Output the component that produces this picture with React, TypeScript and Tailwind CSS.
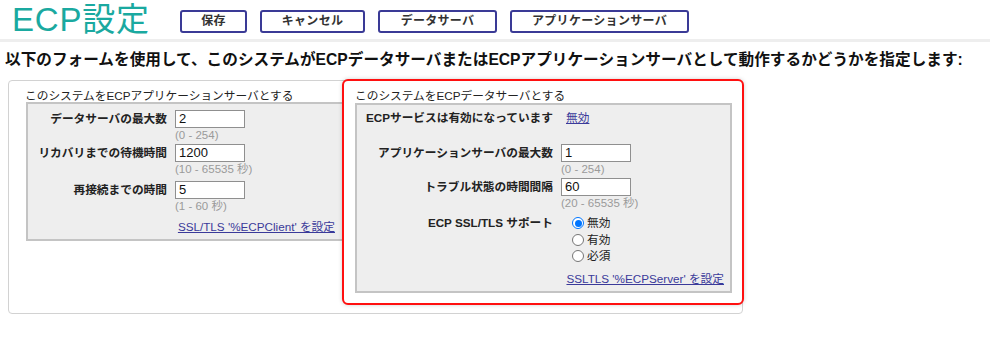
import React from "react";

function Field({ label, value, hint, rowCls, labelW }: { label: string; value: string; hint: string; rowCls: string; labelW: string }) {
  return (
    <div className={"flex items-start " + rowCls}>
      <div className={labelW + " h-[18px] flex items-center justify-end text-right font-bold text-[11.7px] leading-[14px] text-[#222] whitespace-nowrap"}>
        {label}
      </div>
      <div className="ml-[8px]">
        <div className="w-[70px] h-[18px] border border-[#8f8f8f] bg-white text-[13px] leading-[16px] pl-[3px] text-[#111]">{value}</div>
        <div className="text-[11.5px] leading-[12px] text-[#9a9a9a] mt-[1px] whitespace-nowrap">{hint}</div>
      </div>
    </div>
  );
}

function Radio({ checked, label }: { checked?: boolean; label: string }) {
  return (
    <div className="h-[16.5px] flex items-center">
      {checked ? (
        <span className="w-[12px] h-[12px] rounded-full border border-[#0075ff] bg-white flex items-center justify-center">
          <span className="w-[7px] h-[7px] rounded-full bg-[#0075ff]" />
        </span>
      ) : (
        <span className="w-[12px] h-[12px] rounded-full border border-[#767676] bg-white" />
      )}
      <span className="ml-[3px] text-[11.7px] leading-[14px] text-[#222]">{label}</span>
    </div>
  );
}

export default function App() {
  return (
    <div className="w-[990px] h-[345px] bg-white overflow-hidden font-['Liberation_Sans','Noto_Sans_CJK_JP',sans-serif] text-[#222]">
      <div className="flex items-start h-[39px] pl-[12px]">
        <div className="w-[168px] text-[33px] leading-[39px] tracking-[0.8px] text-[#1aa9a0] whitespace-nowrap">ECP設定</div>
        <div className="flex gap-[13px] mt-[10px]">
          <button className="w-[67px] h-[23px] border-2 border-[#3a3a96] rounded-[3px] text-[12px] font-bold tracking-[0.3px] text-[#333] leading-[19px]">保存</button>
          <button className="w-[105px] h-[23px] border-2 border-[#3a3a96] rounded-[3px] text-[12px] font-bold tracking-[0.3px] text-[#333] leading-[19px]">キャンセル</button>
          <button className="w-[119px] h-[23px] border-2 border-[#3a3a96] rounded-[3px] text-[12px] font-bold tracking-[0.3px] text-[#333] leading-[19px]">データサーバ</button>
          <button className="w-[179px] h-[23px] border-2 border-[#3a3a96] rounded-[3px] text-[12px] font-bold tracking-[0.3px] text-[#333] leading-[19px]">アプリケーションサーバ</button>
        </div>
      </div>
      <div className="h-[3px] bg-[#eeeeee]" />
      <div className="mt-[8px] pl-[5px] text-[15.65px] leading-[20px] font-bold text-[#111] whitespace-nowrap">
        以下のフォームを使用して、このシステムがECPデータサーバまたはECPアプリケーションサーバとして動作するかどうかを指定します:
      </div>
      <div className="mt-[10px] ml-[8px] w-[735px] border border-[#d2d2d2] rounded-[4px] flex items-start pb-[8px]">
        <div className="pl-[16px] pt-[8px] w-[336px] shrink-0">
          <div className="text-[11.7px] leading-[13px] text-[#222] whitespace-nowrap">このシステムをECPアプリケーションサーバとする</div>
          <div className="ml-[1px] w-[319px] border-2 border-[#c4c4c4] bg-[#eeeeee] pt-[6px] pb-[5px] pl-[4px]">
            <Field labelW="w-[135px]" rowCls="" label="データサーバの最大数" value="2" hint="(0 - 254)" />
            <Field labelW="w-[135px]" rowCls="mt-[3px]" label="リカバリまでの待機時間" value="1200" hint="(10 - 65535 秒)" />
            <Field labelW="w-[135px]" rowCls="mt-[6px]" label="再接続までの時間" value="5" hint="(1 - 60 秒)" />
            <div className="mt-[8px] flex justify-end pr-[8px]">
              <a className="text-[11.7px] leading-[14px] text-[#3a3a9a] underline whitespace-nowrap">SSL/TLS '%ECPClient' を設定</a>
            </div>
          </div>
        </div>
        <div className="-ml-[3px] -mt-[2px] w-[402px] shrink-0 border-2 border-[#ff1010] rounded-[6px] bg-white shadow-[0_0_4px_rgba(0,0,0,0.18)] pt-[8px] pl-[11px] pr-[10px] pb-[10px]">
          <div className="text-[11.7px] leading-[13px] mb-[1px] text-[#222] whitespace-nowrap">このシステムをECPデータサーバとする</div>
          <div className="w-[377px] border-2 border-[#c4c4c4] bg-[#eeeeee] pt-[5px] pb-[5px] pl-[6px]">
            <div className="flex items-center h-[16px]">
              <div className="w-[190px] text-right font-bold text-[11.7px] leading-[14px] whitespace-nowrap">ECPサービスは有効になっています</div>
              <a className="ml-[13px] text-[11.7px] leading-[14px] text-[#3a3a9a] underline">無効</a>
            </div>
            <Field labelW="w-[190px]" rowCls="mt-[18px] -mr-[1px]" label="アプリケーションサーバの最大数" value="1" hint="(0 - 254)" />
            <Field labelW="w-[190px]" rowCls="mt-[3px]" label="トラブル状態の時間間隔" value="60" hint="(20 - 65535 秒)" />
            <div className="flex items-start mt-[6px]">
              <div className="w-[190px] h-[16.5px] flex items-center justify-end font-bold text-[11.7px] leading-[14px] whitespace-nowrap">ECP SSL/TLS サポート</div>
              <div className="ml-[19px]">
                <Radio checked label="無効" />
                <Radio label="有効" />
                <Radio label="必須" />
              </div>
            </div>
            <div className="mt-[7px] flex justify-end pr-[6px]">
              <a className="text-[11.7px] leading-[14px] text-[#3a3a9a] underline whitespace-nowrap">SSLTLS '%ECPServer' を設定</a>
            </div>
          </div>
        </div>
      </div>
    </div>
  );
}
